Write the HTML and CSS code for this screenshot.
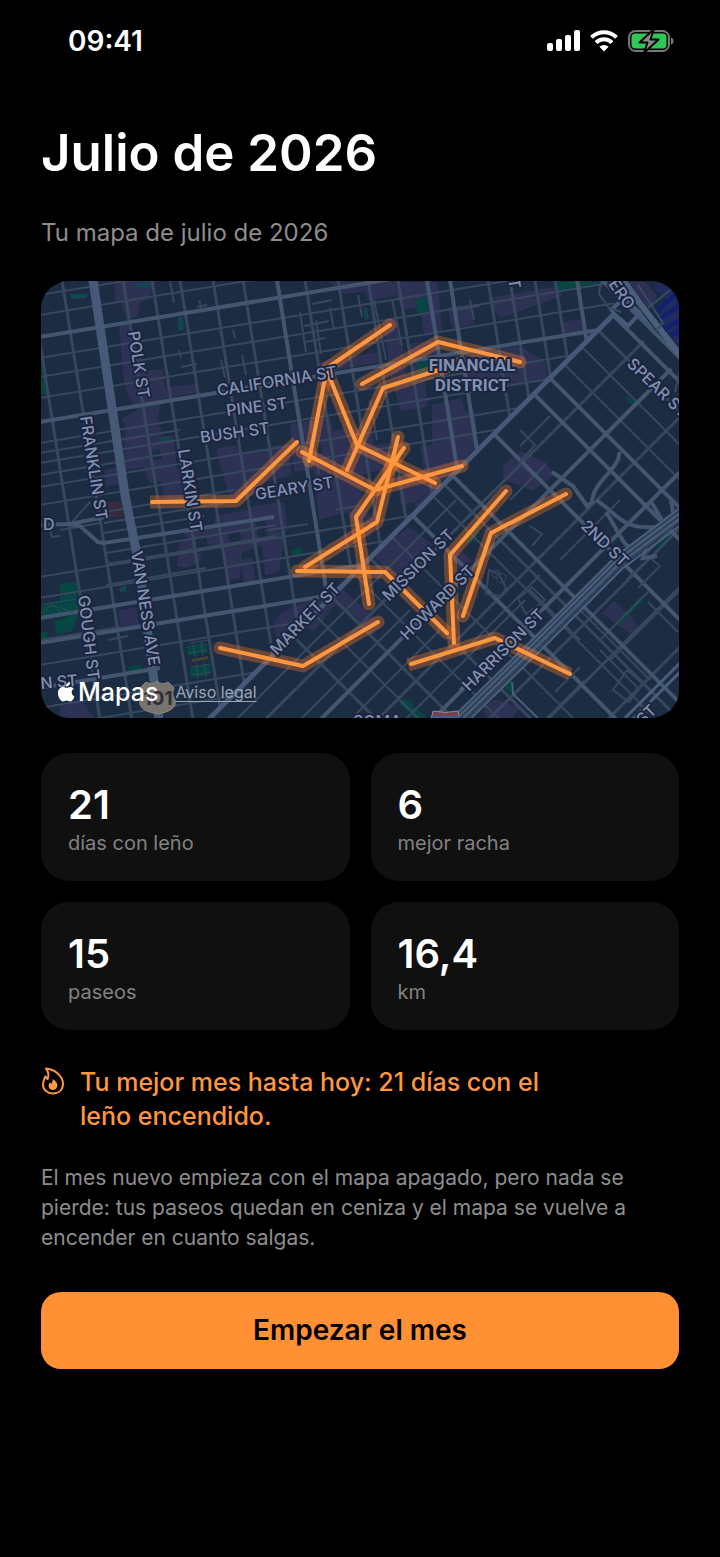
FILE: index.html
```html
<!DOCTYPE html>
<html lang="es">
<head>
<meta charset="utf-8">
<meta name="viewport" content="width=device-width, initial-scale=1">
<title>Julio de 2026</title>
<link rel="stylesheet" href="styles.css">
</head>
<body>
<header class="status">
  <time class="clock">09:41</time>
  <div class="status-icons">
    <svg width="33" height="22" viewBox="0 0 33 22" fill="#fff" aria-label="Cobertura" role="img">
      <rect x="0" y="13" width="6" height="8" rx="2"/><rect x="9" y="9" width="6" height="12" rx="2"/><rect x="18" y="5" width="6" height="16" rx="2"/><rect x="27" y="0" width="6" height="21" rx="2"/>
    </svg>
    <svg width="28" height="22" viewBox="0 0 28 22" fill="none" stroke="#fff" stroke-width="4" aria-label="Wi-Fi" role="img">
      <path d="M1.500 7.300a17.800 17.800 0 0 1 25 0M6 12.600a11.300 11.300 0 0 1 16 0"/><path d="M14 21.500l-4.600-4.700a6.500 6.500 0 0 1 9.200 0z" fill="#fff" stroke="none"/>
    </svg>
    <svg width="46" height="24" viewBox="0 0 46 24" aria-label="Batería cargando" role="img">
      <rect x="1" y="2" width="40" height="20" rx="6.500" fill="none" stroke="#77777a" stroke-width="2"/>
      <path d="M43 8.500c3.500 1 3.500 6 0 7z" fill="#77777a"/>
      <rect x="3.500" y="4.500" width="35" height="15" rx="4" fill="#30c759"/>
      <path d="M26 0L11.500 13.500h8L16 24l14.500-13.500h-8z" fill="#8a8a8d" stroke="#000" stroke-width="2" stroke-linejoin="round"/>
    </svg>
  </div>
</header>

<main class="page">
  <h1 class="title">Julio de 2026</h1>
  <p class="subtitle">Tu mapa de julio de 2026</p>

  <section class="map" aria-label="Mapa de paseos">
    <svg class="map-art" viewBox="41 281 638 437">
      <defs>
        <clipPath id="north"><path d="M40 280H610L616 312L208 720H40z"/></clipPath>
        <clipPath id="south"><path d="M616 312L690 388V730H198z"/></clipPath>
      </defs>
      <rect x="40" y="280" width="640" height="440" fill="#1c2c42"/>

      <!-- commercial areas -->
      <g fill="#2d3254">
        <path d="M115 281h40l-7 19-8 2-2 15-12 2-5-17-6-2z"/>
        <path d="M119 326l9-2 8 24 13 23 14-2 2 18 32-3 2 8-37 7-4 17 4 20-15 3-12-12-8 5-5-14 15-7-10-18-4-20z"/>
        <path d="M125 422l16-3 4 20 28-4 4 34 10-3 3 30-25 5-4-20-12 2-5-16-20 3zM104 470l18-4-2 18-14 2z"/>
        <path d="M182 528l32-2 1-10 35-7 6-4 28-3 3 20-8 50-14 3-3-30-20 7-2 26-14 3-3-32-18-6-6 20-13 5-9-2 2-22 8-4z"/>
        <path d="M216 449l20-4 3 8 50-10 3 32-30 8-4 12-28 4z"/>
        <path d="M330 282h108l4 50-18 3-4-28-18 3-5-15-28 6-4-10-20 3zM318 362l60-10 3 10-46 8-6 8zM383 320l14-4 10 60-16 4z"/>
        <path d="M448 308l22-4 4 20-22 4zM488 298l72-12 2 10-62 22-7-10zM562 322l19-3 2 13-19 3z"/>
        <path d="M394 386l31-7 3 28-28 4zM408 344l30-4 3 34-26 4zM460 352l60-6 25 16 3 18-20 4-60 6z"/>
        <path d="M432 405l30-7 6 15 7-2 3 34-27 28-36 30-14 2-5-30 28-4-4-24 12-2z"/>
        <path d="M290 424l40-7 3 14 38-6 3 20 14-2 4 25-28 6-4 30 16 18-7 18-16-18-6-10-28 8-5-50-20 2z"/>
        <path d="M282 612l58-25 42 38-10 11-36-32-22 28-18-10-18 20-5-20zM240 560l12-2 4 24-12 2z"/>
        <path d="M372 555l37-28 24 18-35 34z"/>
        <path d="M503 465l18-14 26 12 7 12-22 16-15-7-14-4zM415 505l22-22 6 5-22 24z"/>
        <path d="M602 613l12-12 18 16 8 13-5 6-9-5z"/>
        <path d="M118 611l18-4 3 18-18 3zM483 707l13-8 24 8-10 16h-22zM627 282h18l12 14-8 14z"/>
        <path d="M451 556l6-9 14 13-10 14zM60 706l22-5 14 19H60z"/>
      </g>
      <path d="M340 300l14-4 6 18-16 2zM305 443l14-3 4 12-14 3zM345 436l16-3 2 10-14 2zM418 410l10-2 4 14-10 3zM462 400l8-2 3 12-8 1zM196 540l10-4 2 14-10 4zM228 534l12-3 2 14-10 2zM255 518l10-2 2 22-8 2zM150 452l10-2 2 9-10 2z" fill="#1c2c42"/>
      <rect x="105" y="502" width="17" height="15" fill="#382b40"/>

      <!-- parks and water -->
      <g fill="#074743">
        <path d="M40 356l7 38-7 1zM60 584l17-2 0 13 2 18-7 18-15 4-3-13 18-7-32 6v-16l20-4zM40 633l7-2 1 6-8 3z"/>
        <path d="M128 667l13-3 1 8-13 3z"/>
        <path d="M555 282h50l-26 5-22 6zM416 300l11-3 1 15-11 2zM418 362l12-2-4 14-9-1zM628 396l9 8-3 3-8-8zM291 550l10-3 3 8-11 1z"/>
        <path d="M617 621l24-25 2 5-23 24zM399 703l6-5 22 20h-12zM500 684l13-14-2 24-8-8zM657 542l17-16-2 8-15 14zM465 532l16-8-5 16-9 4z"/>
      </g>
      <path d="M70 294h18l-2 4-15 1zM134 283h18l-5 5-10-1zM178 318l5-2 1 13-6 2zM160 438l8-2 3 5-9 2zM363 308l4-1 2 11-4 2zM120 588l6-3v7h-6z" fill="#134655"/>
      <path d="M654 282h26v66l-22-30 10-18-12-9z" fill="#202c5c"/>
      <path d="M656 311l24-20M660 319l20-14M664 329l16-9M671 335l9-5" stroke="#12206f" stroke-width="5"/>

      <!-- streets north of Market -->
      <g clip-path="url(#north)" fill="none" stroke="#37475e">
        <path stroke-width="2" d="M40 295l600-99M40 315l600-99M40 358l600-99M40 377l600-99M40 398l600-99M40 443l600-99M40 453l140-23M40 475l150-25M40 463l600-99M40 487l600-99M40 505l600-99M60 530l40-7M104 512l130-22M104 523l120-20M104 533l100-17M106 553l170-28M106 564l170-28M40 577l600-99M106 585l100-17M40 598l600-99M40 640l80-13M40 665l600-99M40 708l600-99M40 728l600-99M40 749l600-99"/>
        <path stroke-width="3" d="M30 280l70 440M62 280l70 440M123 280l70 440M152 280l70 440M180 280l70 440M213 280l70 440M243 280l70 440M305 280l70 440M338 280l70 440M368 280l70 440M398 280l70 440M488 280l70 440M510 280l70 440M535 280l24 150M555 280l24 150"/>
        <path stroke-width="2" d="M170 281l4 22M197 307l10-2M199 300l2 8M233 330l2 8M221 360l4 18M242 355l4 20M181 367l16-3M179 350l2 8M300 312l6 40M316 320l5 34M330 308l4 22M304 326l25-5M305 342l20-4M312 304l20-4M358 295l4 22M374 300l12 60M392 300l10 46M470 300l4 20M456 310l24-4M310 420l9 54M370 400l7 40M268 530l40-6M336 510l20-4M72 522l18-20M108 640l20-4M50 530l2 7 8-1"/>
        <path stroke="#43556f" stroke-width="4" d="M40 337l600-99M40 422l600-99M40 618l600-99M40 643l600-99M40 688l120-20M277 280l70 440M427 280l40 250M450 280l35 220M577 280l14 88M40 525l30-1 10 2 18 16 6 1 170-26M70 524l40-8"/>
        <path stroke="#465a78" stroke-width="9" d="M93 280l32 215 14 70 20 155"/>
      </g>

      <!-- civic square -->
      <g fill="#074743"><path d="M186 646l20-3 2 10-20 3zM190 668l21-4-1 11-20 3z"/><path d="M192 659l16-3v3l-16 3z" fill="#40472f"/></g>
      <path d="M190 643l18-3M189 653l18-3M191 667l20-3M192 675l19-3M193 642l2 15M201 641l2 15M196 662l2 17M204 662l2 16M44 604l32-5M44 612q8-14 16 0M60 607l14 6" fill="none" stroke="#37475e"/>

      <!-- streets south of Market -->
      <g clip-path="url(#south)" fill="none" stroke="#37475e">
        <path stroke-width="2" d="M236 720l220-220M264 720l30-30M300 720l110-110M320 720l170-170M350 720l90-90M405 720l120-120M460 655l80-80M510 500l35-35M520 446l30-30M545 720l40-40M560 560l60-60M600 640l50-50M610 660l70-70M640 560l44-44M520 285l440 440M485 285l440 440M390 290l100 100M290 270l160 160M217 280l440 440M190 335l385 385M130 350l370 370M50 350l370 370M580 610l70 70M600 650l40 40M530 590l50 50"/>
        <path stroke-width="3" d="M265 720l440-440M377 720l440-440M488 720l440-440M547 720l440-440M607 720l440-440M670 720l440-440M548 280l440 440M240 280l440 440M92 280l440 440M15 280l440 440M-63 280l440 440"/>
        <path stroke="#43556f" stroke-width="4" d="M320 720l440-440M432 720l440-440M578 280l440 440M452 280l440 440M420 280l440 440M340 280l440 440M257 280l440 440M177 280l440 440"/>
        <path stroke-width="2" d="M520 430l15 15-15 17 8 9M518 599l14-12 13 13-19 14zM626 580l24-22 10 8-22 22M613 690l14-20 16 14-14 18zM489 570l10 4 7 14-5 8-15-2zM530 526l12 8-10 12M555 692l25-25M648 602l30 30M640 705l8 8"/>
        <circle cx="496" cy="574" r="4"/><circle cx="501" cy="578" r="5"/>
        <path stroke="#43556f" stroke-width="4" d="M552 472l21 14 14 20 5-4c0-20 30-35 27-50M596 500c20 12 24 30 60 27M606 512c15 24 20 40 30 36M650 500l12 20M671 500l4 24M647 540l-4 18 14-2"/>
        <path stroke="#30415a" stroke-width="13" d="M688 508l-70 54-74 74-92 92"/>
        <path stroke="#4b5f7d" stroke-width="2" d="M688 502l-72 54-76 76-92 90M688 507l-72 54-76 76-92 90M690 511l-72 54-76 76-92 90M694 515l-72 54-76 76-92 90M512 682l1 12 35 34"/>
        <path stroke="#4b5f7d" stroke-width="3" d="M460 690l50-42M625 718l55-55M630 722l55-55"/>
      </g>
      <g fill="none">
        <path d="M613 315L208 720" stroke="#465a78" stroke-width="5"/>
        <path d="M610 311l14-13 16 15-12 13-16-14M640 314l12 15" stroke="#465a78" stroke-width="4"/>
        <path d="M590 268l46 46 52 52" stroke="#43556f" stroke-width="4"/>
        <path d="M605 255l36 50 44 56" stroke="#4b5f7d" stroke-width="6"/>
        <path d="M601 282l-2 12 10 14 12 4M638 285l25 38-8 9M648 308l22-18M680 372l-5 20" stroke="#3a4a61" stroke-width="2"/>
      </g>

      <!-- walks -->
      <g fill="none" stroke-linejoin="round" stroke-linecap="round">
        <g stroke="#ff7a26" stroke-opacity=".34" stroke-width="13">
          <path stroke-linecap="butt" d="M150 502L236 501L297 442"/><path d="M390 325L327 368L309 461"/><path d="M327 371L357 445L435 483"/><path d="M362 384L438 342L520 362"/><path d="M460 363L383 388L347 470"/><path d="M302 452L375 490L462 466"/><path d="M398 437L377 522L305 567"/><path d="M404 448L356 517L369 604"/><path d="M297 571L385 572L447 633"/><path d="M220 648L303 666L378 622"/><path stroke-linecap="butt" d="M408 665L495 638L570 674"/><path d="M506 491L450 555L454 643"/><path d="M566 494L491 533L463 616"/>
        </g>
        <path stroke="#ff9640" stroke-width="4" d="M152 502L236 501L297 442M390 325L327 368L309 461M327 371L357 445L435 483M362 384L438 342L520 362M442 369L383 388L347 470M302 452L375 490L462 466M398 437L377 522L305 567M404 448L356 517L369 604M297 571L385 572L447 633M220 648L303 666L378 622M411 664L495 638L570 674M506 491L450 555L454 643M566 494L491 533L463 616"/>
      </g>

      <!-- road shields -->
      <path d="M146 682q6 4 11-1 5 5 11 1l6 6q-3 6 1 12c2 8-6 12-17 14-12-2-20-6-18-14q3-6 0-12z" fill="#77736f" stroke="#8b8884"/>
      <path d="M433 711q12 3 25 0l2 9h-29z" fill="#793f4b" stroke="#8c8fa0"/><path d="M432 716h28v4h-28z" fill="#3c5f94"/>

      <!-- map labels -->
      <g class="label">
        <text transform="translate(128 332) rotate(81)">POLK ST</text>
        <text transform="translate(80 417) rotate(81)">FRANKLIN ST</text>
        <text transform="translate(178 450) rotate(81)">LARKIN ST</text>
        <text transform="translate(131 552) rotate(81)">VAN NESS AVE</text>
        <text transform="translate(78 596) rotate(83)">GOUGH ST</text>
        <text transform="translate(218 396) rotate(-9)">CALIFORNIA ST</text>
        <text transform="translate(227 416) rotate(-7)">PINE ST</text>
        <text transform="translate(201 443) rotate(-8)">BUSH ST</text>
        <text transform="translate(256 500) rotate(-9)">GEARY ST</text>
        <text transform="translate(277 656) rotate(-46)">MARKET ST</text>
        <text transform="translate(389 602) rotate(-45)">MISSION ST</text>
        <text transform="translate(407 641) rotate(-45)">HOWARD ST</text>
        <text transform="translate(469 692) rotate(-45)">HARRISON ST</text>
        <text transform="translate(580 527) rotate(44)">2ND ST</text>
        <text transform="translate(626 365) rotate(44)">SPEAR ST</text>
        <text transform="translate(608 284) rotate(55)">ERO</text>
        <text transform="translate(41 689) rotate(-5)">N ST</text>
        <text x="43" y="530">D</text>
        <text transform="translate(508 279) rotate(81)">T</text>
        <text x="353" y="727">SOMA</text>
        <text transform="translate(643 726) rotate(-45)">ST</text>
      </g>
      <g class="label district" text-anchor="middle"><text x="472" y="371">FINANCIAL</text><text x="472" y="391">DISTRICT</text></g>
      <text class="shield" x="158" y="705" text-anchor="middle">101</text>
    </svg>
    <div class="credit">
      <span class="brand"><svg width="17" height="20" viewBox="0 0 17 20" fill="#fff" aria-hidden="true"><path d="M12 0c.2 2.500-1.700 4.500-4 4.600C7.800 2.300 9.800.3 12 0zM8.600 5.800c1 0 2-.9 3.700-.9 1.600.1 2.900.8 3.600 1.900-3.300 1.900-2.800 6.200.6 7.600-.8 2.100-2.300 4.900-4.200 5-1.500 0-2-.9-3.600-.9s-2.200.9-3.600.9C2.700 19.400 0 14.900 0 11.200c0-3.900 2.400-6.200 4.900-6.200 1.600 0 2.700.8 3.700.8z"/></svg>Mapas</span>
      <a class="legal" href="#legal">Aviso legal</a>
    </div>
  </section>

  <dl class="stats">
    <div class="card"><dd class="value">21</dd><dt class="name">días con leño</dt></div>
    <div class="card"><dd class="value">6</dd><dt class="name">mejor racha</dt></div>
    <div class="card"><dd class="value">15</dd><dt class="name">paseos</dt></div>
    <div class="card"><dd class="value">16,4</dd><dt class="name">km</dt></div>
  </dl>

  <div class="record">
    <svg class="flame" width="24" height="28" viewBox="0 0 24 28" aria-hidden="true"><path d="M5 1.500C13 2 22.500 9 22 17.500 21.500 23.500 17 26.500 12 26.500 6.500 26.500 2 23 2 17.500c0-3.500 1.400-5.500 2.300-8l2.300 2.700C8 8.500 7.500 4.500 5 1.500z" fill="none" stroke="#ff9640" stroke-width="2" stroke-linejoin="round"/><path d="M11.500 12c3.500 2 5.300 4.500 4.800 7.300-.4 2.400-2.200 3.700-4.300 3.700-2.600 0-4.400-1.700-4.400-4 0-1.500.7-2.400 1.300-3.500l1.500 1.200c1-1.400 1.500-2.900 1.100-4.700z" fill="#ff9640"/></svg>
    <p class="record-text">Tu mejor mes hasta hoy: 21 días con el leño encendido.</p>
  </div>

  <p class="note">El mes nuevo empieza con el mapa apagado, pero nada se pierde: tus paseos quedan en ceniza y el mapa se vuelve a encender en cuanto salgas.</p>

  <button class="start" type="button">Empezar el mes</button>
</main>
</body>
</html>
```
FILE: styles.css
```css
* { box-sizing: border-box; }

body {
  margin: 0;
  min-height: 100vh;
  background: #000;
  color: #fff;
  font-family: Inter, "Liberation Sans", sans-serif;
}

p, h1, dl, dd { margin: 0; }

.status {
  display: flex;
  align-items: center;
  justify-content: space-between;
  padding: 24px 46px 0 68px;
}
.clock { font-size: 28px; line-height: 34px; font-weight: 600; }
.status-icons { display: flex; align-items: center; gap: 10px; }

.page {
  display: flex;
  flex-direction: column;
  padding: 64px 41px 0;
}

.title { font-size: 51px; line-height: 62px; font-weight: 600; }
.subtitle {
  margin-top: 32px;
  color: #8e8e8e;
  font-size: 24px;
  line-height: 34px;
}

.map {
  position: relative;
  margin-top: 31px;
  overflow: hidden;
  border-radius: 28px;
}
.map-art { display: block; width: 100%; height: auto; }
.label {
  fill: #8391b0;
  stroke: #1b2540;
  stroke-width: 4px;
  stroke-linejoin: round;
  paint-order: stroke;
  font-size: 16px;
  font-weight: 500;
}
.district { font-family: Roboto, sans-serif; font-weight: 700; font-size: 17px; }
.shield { fill: #2d2d33; font-size: 19px; font-weight: 700; }
.credit {
  position: absolute;
  left: 17px;
  bottom: 10px;
  display: flex;
  align-items: center;
  gap: 17px;
}
.brand {
  display: flex;
  align-items: center;
  gap: 3px;
  font-size: 25px;
  line-height: 32px;
  font-weight: 500;
}
.legal { color: #9da6b5; font-size: 16px; line-height: 20px; text-underline-offset: 3px; }

.stats {
  display: grid;
  grid-template-columns: 1fr 1fr;
  gap: 21px;
  margin-top: 35px;
}
.card {
  padding: 27px 27px 25px;
  border-radius: 28px;
  background: #101010;
}
.value { font-size: 40px; line-height: 50px; font-weight: 600; }
.name { color: #828282; font-size: 20px; line-height: 26px; }

.record {
  display: flex;
  gap: 15px;
  margin-top: 35px;
  color: #ff9640;
}
.flame { flex: none; margin-top: 2px; }
.record-text { max-width: 480px; font-size: 25px; line-height: 34px; font-weight: 500; }

.note {
  margin-top: 30px;
  color: #8e8e8e;
  font-size: 21px;
  line-height: 30px;
}

.start {
  margin-top: 39px;
  padding: 21px;
  border: 0;
  border-radius: 20px;
  background: #ff9033;
  color: #000;
  font-family: inherit;
  font-size: 28px;
  line-height: 35px;
  font-weight: 600;
}
```
